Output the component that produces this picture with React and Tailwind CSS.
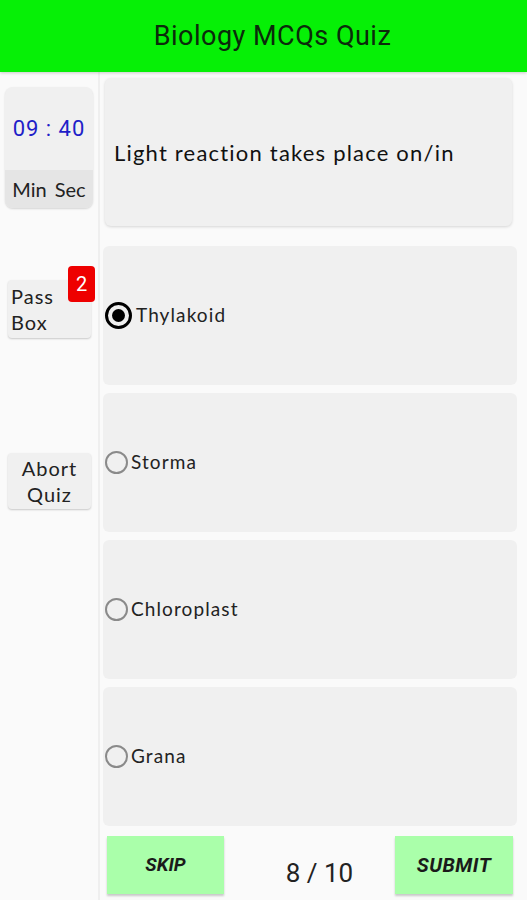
import React, { useState } from 'react'

const options = ['Thylakoid', 'Storma', 'Chloroplast', 'Grana']

const App = () => {

    // state pilihan jawaban
    const [picked, setPicked] = useState(0)

    return (
        <div className="h-[900px] w-full flex flex-col bg-[#fafafa] overflow-hidden font-['Lato',sans-serif]">

            {/* header */}
            <div className="h-[72px] shrink-0 bg-[#06f006] flex items-center justify-center pl-[18px] shadow-[0_1px_3px_rgba(0,0,0,0.2)] z-10">
                <h1 className="text-[27px] tracking-[0.5px] text-[#0b2a0b] font-['Roboto',sans-serif]">Biology MCQs Quiz</h1>
            </div>

            <div className="flex flex-1">

                {/* sidebar kiri */}
                <div className="w-[100px] shrink-0 border-r-2 border-[#efefef] flex flex-col">

                    {/* timer */}
                    <div className="mt-[15px] ml-[5px] w-[88px] h-[121px] rounded-lg bg-[#f0f0f0] shadow-[0_1px_2px_rgba(0,0,0,0.15)] flex flex-col overflow-hidden">
                        <div className="h-[83px] flex items-center justify-center text-[22px] tracking-[1px] text-[#1f1fc8] font-['Roboto',sans-serif]">09 : 40</div>
                        <div className="flex-1 bg-[#e5e5e5] flex items-center justify-center gap-[8px] text-[20px] text-[#222]">
                            <span>Min</span><span>Sec</span>
                        </div>
                    </div>

                    {/* pass box */}
                    <div className="relative mt-[72px] ml-[8px] w-[83px] h-[58px] rounded bg-[#f0f0f0] shadow-[0_1px_2px_rgba(0,0,0,0.2)] pl-[3px] flex flex-col justify-center text-[20px] tracking-[1px] leading-[26px] text-[#222]">
                        <span>Pass</span>
                        <span>Box</span>
                        <div className="absolute -top-[14px] left-[60px] w-[27px] h-[36px] bg-[#ee0000] rounded-sm flex items-center justify-center text-white text-[20px] tracking-normal font-['Roboto',sans-serif]">2</div>
                    </div>

                    {/* abort quiz */}
                    <div className="mt-[115px] ml-[8px] w-[83px] h-[56px] rounded bg-[#f0f0f0] shadow-[0_1px_2px_rgba(0,0,0,0.2)] flex flex-col items-center justify-center text-[20px] tracking-[1px] leading-[26px] text-[#222]">
                        <span>Abort</span>
                        <span>Quiz</span>
                    </div>
                </div>

                {/* konten utama */}
                <div className="flex-1 flex flex-col">

                    {/* soal */}
                    <div className="mt-[6px] ml-[5px] mr-[15px] h-[148px] rounded-md bg-[#f0f0f0] shadow-[0_1px_3px_rgba(0,0,0,0.15)] flex items-center px-[9px]">
                        <p className="text-[22px] tracking-[1.2px] text-[#111]">Light reaction takes place on/in</p>
                    </div>

                    {/* pilihan */}
                    <div className="mt-[20px] ml-[3px] mr-[10px] flex flex-col gap-[8px]">
                        {options.map((item, index) => (
                            <button key={index} onClick={() => setPicked(index)} className="h-[139px] rounded-md bg-[#f0f0f0] flex items-center pl-[2px] text-left">
                                {picked === index ? (
                                    <span className="w-[27px] h-[27px] rounded-full border-[3px] border-black flex items-center justify-center mr-[4px]">
                                        <span className="w-[13px] h-[13px] rounded-full bg-black"></span>
                                    </span>
                                ) : (
                                    <span className="w-[23px] h-[23px] rounded-full border-2 border-[#8a8a8a] mr-[3px]"></span>
                                )}
                                <span className="text-[19px] text-[#222] tracking-[1.1px]">{item}</span>
                            </button>
                        ))}
                    </div>

                    {/* tombol bawah */}
                    <div className="mt-[10px] ml-[7px] mr-[14px] flex items-start justify-between">
                        <button className="w-[117px] h-[58px] bg-[#aaffaa] shadow-[0_2px_2px_rgba(0,0,0,0.2)] text-[19px] font-bold italic text-[#1a1a1a] font-['Roboto',sans-serif]">SKIP</button>
                        <span className="mt-[18px] ml-[20px] text-[26px] text-[#222] font-['Roboto',sans-serif]">8 / 10</span>
                        <button className="w-[118px] h-[58px] bg-[#aaffaa] shadow-[0_2px_2px_rgba(0,0,0,0.2)] text-[20px] font-bold italic tracking-[0.5px] text-[#1a1a1a] font-['Roboto',sans-serif]">SUBMIT</button>
                    </div>
                </div>
            </div>
        </div>
    )
}

export default App
